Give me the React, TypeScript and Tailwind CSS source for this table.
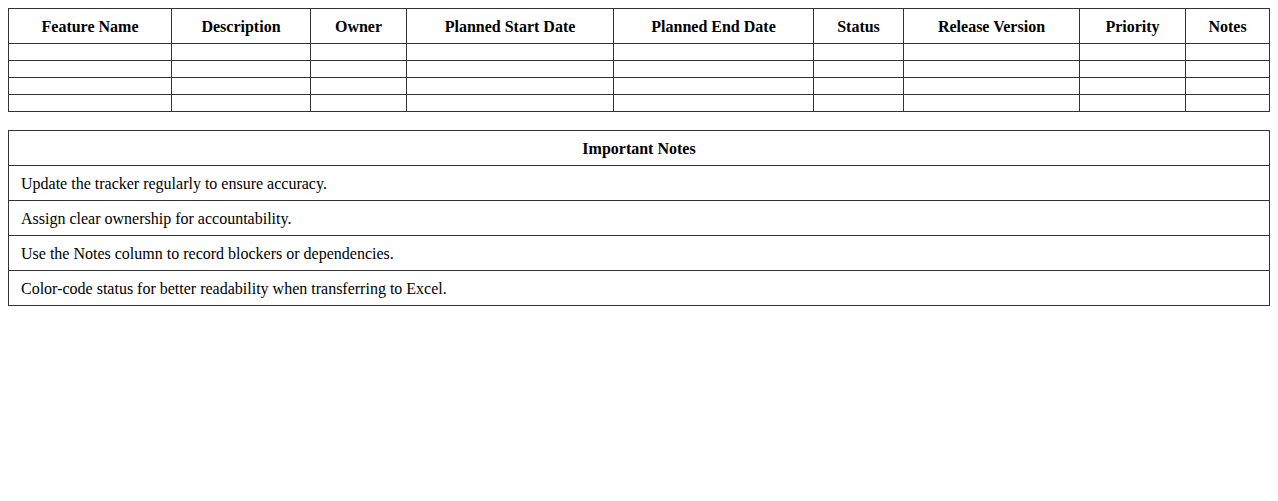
import React from "react";

const headers = [
  "Feature Name",
  "Description",
  "Owner",
  "Planned Start Date",
  "Planned End Date",
  "Status",
  "Release Version",
  "Priority",
  "Notes",
];

const colClasses = [
  "w-[163px]",
  "w-[139px]",
  "w-[96px]",
  "w-[207px]",
  "w-[200px]",
  "w-[90px]",
  "w-[176px]",
  "w-[106px]",
  "w-[84px]",
];

const notes = [
  "Update the tracker regularly to ensure accuracy.",
  "Assign clear ownership for accountability.",
  "Use the Notes column to record blockers or dependencies.",
  "Color-code status for better readability when transferring to Excel.",
];

export default function App() {
  return (
    <div
      className="p-2 bg-white text-black text-[16px] leading-[18px] min-h-[501px]"
      style={{ fontFamily: '"Liberation Serif", "Times New Roman", serif' }}
    >
      <table className="w-[1262px] border-collapse table-fixed">
        <colgroup>
          {colClasses.map((c, i) => (
            <col key={i} className={c} />
          ))}
        </colgroup>
        <thead>
          <tr>
            {headers.map((h) => (
              <th key={h} className="border border-[#333] px-2 pt-[9px] pb-[7px] font-bold text-center">
                {h}
              </th>
            ))}
          </tr>
        </thead>
        <tbody>
          {[0, 1, 2, 3].map((r) => (
            <tr key={r}>
              {headers.map((h) => (
                <td key={h} className="border border-[#333] p-2"></td>
              ))}
            </tr>
          ))}
        </tbody>
      </table>

      <table className="w-full border-collapse mt-[18px]">
        <thead>
          <tr>
            <th className="border border-[#333] px-3 pt-[9px] pb-[7px] font-bold text-center">Important Notes</th>
          </tr>
        </thead>
        <tbody>
          {notes.map((n) => (
            <tr key={n}>
              <td className="border border-[#333] px-3 pt-[9px] pb-[7px] text-left">{n}</td>
            </tr>
          ))}
        </tbody>
      </table>
    </div>
  );
}
